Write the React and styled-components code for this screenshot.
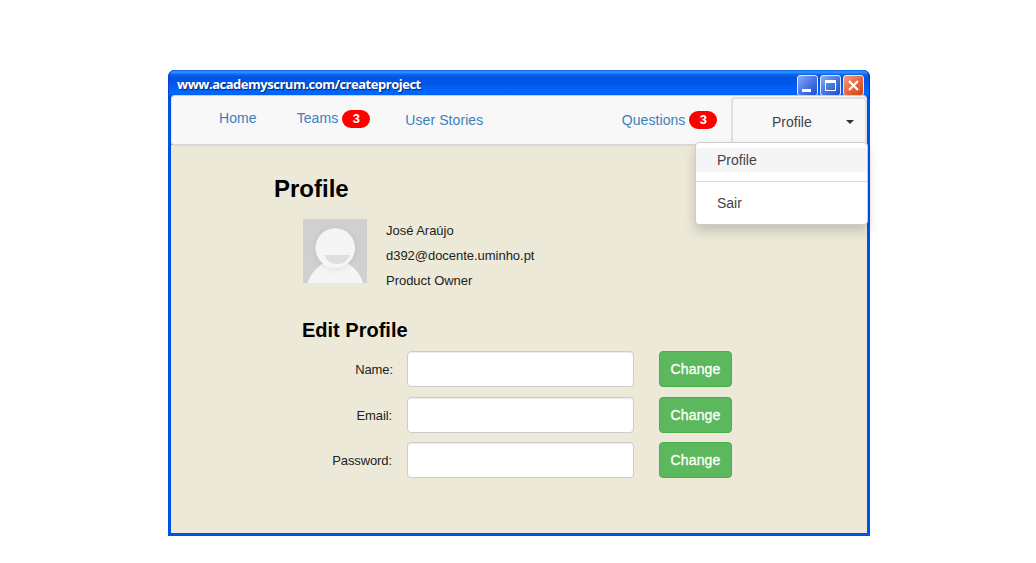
import React from "react";
import styled, { createGlobalStyle } from "styled-components";

const GlobalStyle = createGlobalStyle`
  * { box-sizing: border-box; }
  body { margin: 0; background: #fff; font-family: "Liberation Sans", Arial, sans-serif; overflow: hidden; }
  h1, h2, p { margin: 0; }
`;

const Page = styled.main`
  padding: 70px 168px 27px;
  height: 563px;
`;

const Window = styled.section`
  width: 702px;
  height: 466px;
  display: flex;
  flex-direction: column;
  padding: 0 3px 3px;
  background: #0054e3;
  border-radius: 7px 7px 0 0;
`;

const TitleBar = styled.header`
  flex: none;
  height: 29px;
  margin: 0 -3px -4px;
  padding: 5px 6px 0 9px;
  display: flex;
  justify-content: space-between;
  border-radius: 7px 7px 0 0;
  background: linear-gradient(to bottom, #0a5ee0 0, #3c96ff 2px, #2080f8 3px, #0562ee 5px, #0054e3 8px, #0055e6 13px, #0162fb 19px, #0167ff 23px, #0060f4 25px, #003dc0 29px);
  box-shadow: inset 1px 0 #0a40c8, inset -1px 0 #0a35b0;
`;

const Title = styled.span`
  font: bold 13px/19px "Open Sans", "Trebuchet MS", sans-serif;
  letter-spacing: ${(p) => p.$spacing}px;
  color: #fff;
  text-shadow: 1px 1px 1px #0a246a;
`;

const Controls = styled.div`
  display: flex;
  gap: 2px;
`;

const ControlButton = styled.button`
  width: 21px;
  height: 21px;
  padding: 0;
  border: 1px solid #dfe8ff;
  border-radius: 3px;
  background: ${(p) =>
    p.$close
      ? "linear-gradient(135deg, #f0a088 0%, #e5683f 50%, #d8430f 100%)"
      : "linear-gradient(135deg, #8fabf3 0%, #4f7be4 45%, #1a4fd2 100%)"};
  svg { display: block; }
`;

const NavBar = styled.nav`
  position: relative;
  flex: none;
  height: 51px;
  display: flex;
  align-items: flex-start;
  background: #f8f8f8;
  border: 1px solid #e4e4e4;
  border-top-color: #b9d3fa;
  border-bottom: 2px solid #d9d9d9;
  border-radius: 4px;
  margin-bottom: -1px;
`;

const NavLink = styled.a`
  display: flex;
  gap: 4px;
  margin-left: ${(p) => p.$gap}px;
  margin-top: ${(p) => p.$top}px;
  font-size: 14px;
  line-height: 18px;
  letter-spacing: 0.08px;
  color: #3a80bd;
  white-space: nowrap;
`;

const Badge = styled.span`
  width: 28px;
  height: 18px;
  margin-top: ${(p) => p.$drop || 0}px;
  border-radius: 9px;
  background: #f00;
  color: #fff;
  font-size: 13px;
  font-weight: bold;
  line-height: 18px;
  text-align: center;
`;

const Dropdown = styled.div`
  position: relative;
  margin: 1px -1px 0 auto;
  width: 136px;
  height: 47px;
  border: 2px solid #dfdfdf;
  border-bottom: 0;
  border-radius: 4px 4px 0 0;
`;

const Toggle = styled.div`
  display: flex;
  align-items: center;
  justify-content: space-between;
  height: 46px;
  padding: 0 11px 0 39px;
  font-size: 14px;
  color: #444;
`;

const Caret = styled.span`
  border: 4px solid transparent;
  border-top-color: #333;
  border-bottom: 0;
`;

const Menu = styled.div`
  position: absolute;
  z-index: 2;
  right: -3px;
  top: 43px;
  width: 173px;
  height: 83px;
  padding: 5px 0 0;
  background: #fff;
  border: 1px solid #ccc;
  border-radius: 4px;
  box-shadow: 0 6px 12px rgba(0, 0, 0, 0.18);
`;

const MenuItem = styled.div`
  height: 24px;
  padding-left: 21px;
  font-size: 14px;
  line-height: 24px;
  color: #444;
  background: ${(p) => (p.$active ? "#f5f5f5" : "transparent")};
`;

const Divider = styled.div`
  height: 1px;
  margin: 9px 0;
  background: #d5d5d5;
`;

const Content = styled.div`
  flex: 1;
  padding: 30px 0 0 103px;
  background: #ece9d8;
  color: #000;
`;

const Heading = styled.h1`
  font-size: 24px;
  line-height: 28px;
`;

const Summary = styled.div`
  display: flex;
  gap: 19px;
  margin: 16px 0 0 29px;
`;

const Details = styled.div`
  font-size: 13px;
  line-height: 25px;
  letter-spacing: -0.03px;
  color: #222;
  margin-top: -1px;
`;

const SubHeading = styled.h2`
  font-size: 20px;
  line-height: 24px;
  margin: 25px 0 0 28px;
`;

const Form = styled.div`
  display: grid;
  grid-template-columns: 119px 227px 73px;
  grid-template-rows: 36px 36px 36px;
  row-gap: 9.5px;
  margin-top: 9px;
  align-items: center;
`;

const Label = styled.label`
  padding-top: 2px;
  padding-right: ${(p) => p.$inset}px;
  font-size: 13px;
  line-height: 16px;
  letter-spacing: -0.1px;
  color: #222;
  text-align: right;
`;

const Input = styled.input`
  width: 227px;
  height: 36px;
  margin-left: 14px;
  border: 1px solid #ccc;
  border-radius: 4px;
  background: #fff;
  box-shadow: inset 0 1px 1px rgba(0, 0, 0, 0.075);
`;

const ChangeButton = styled.button`
  width: 73px;
  height: 36px;
  margin-left: 39px;
  padding: 0;
  border: 1px solid #4cae4c;
  border-radius: 4px;
  background: #5cb85c;
  color: #fff;
  font: 14px "Liberation Sans", Arial, sans-serif;
  letter-spacing: 0.15px;
  -webkit-text-stroke: 0.3px #fff;
`;

const Avatar = () => (
  <svg width="64" height="64" viewBox="0 0 64 64" aria-hidden="true">
    <defs>
      <filter id="soft" x="-30%" y="-30%" width="160%" height="160%">
        <feDropShadow dx="0" dy="1" stdDeviation="3" floodOpacity="0.1" />
      </filter>
      <clipPath id="frame"><rect width="64" height="64" /></clipPath>
    </defs>
    <g clipPath="url(#frame)">
      <rect width="64" height="64" fill="#d0d0d0" />
      <path d="M4.5 64C8 54 14 48 21 44H44C51 48 57 54 60 64Z" fill="#f5f5f5" />
      <circle cx="32.3" cy="29" r="19.8" fill="#f5f5f5" filter="url(#soft)" />
      <path d="M21.5 36H47C44 42 40 45 34 45S24 42 21.5 36Z" fill="#dedede" />
    </g>
  </svg>
);

const fields = [
  { label: "Name:", inset: 0 },
  { label: "Email:", inset: 1 },
  { label: "Password:", inset: 1 },
];

export default function App() {
  return (
    <Page>
      <GlobalStyle />
      <Window>
        <TitleBar>
          <Title $spacing={-0.48}>www.academyscrum.com/createproject</Title>
          <Controls>
            <ControlButton aria-label="Minimize">
              <svg width="19" height="19"><path d="M4 13h9v3H4z" fill="#fff" /></svg>
            </ControlButton>
            <ControlButton aria-label="Maximize">
              <svg width="19" height="19"><path d="M4 4h11v11H4zM5 7v7h9V7z" fill="#fff" fillRule="evenodd" /></svg>
            </ControlButton>
            <ControlButton $close aria-label="Close">
              <svg width="19" height="19"><path d="M5 5l9 9M14 5l-9 9" stroke="#fff" strokeWidth="2.2" /></svg>
            </ControlButton>
          </Controls>
        </TitleBar>
        <NavBar>
          <NavLink $gap={47} $top={13}>Home</NavLink>
          <NavLink $gap={40} $top={13}>Teams<Badge $drop={1}>3</Badge></NavLink>
          <NavLink $gap={35} $top={15}>User Stories</NavLink>
          <NavLink $gap={138.4} $top={15}>Questions<Badge>3</Badge></NavLink>
          <Dropdown>
            <Toggle>Profile<Caret /></Toggle>
            <Menu>
              <MenuItem $active>Profile</MenuItem>
              <Divider />
              <MenuItem>Sair</MenuItem>
            </Menu>
          </Dropdown>
        </NavBar>
        <Content>
          <Heading>Profile</Heading>
          <Summary>
            <Avatar />
            <Details>
              <p>José Araújo</p>
              <p>d392@docente.uminho.pt</p>
              <p>Product Owner</p>
            </Details>
          </Summary>
          <SubHeading>Edit Profile</SubHeading>
          <Form>
            {fields.map(({ label, inset }) => (
              <React.Fragment key={label}>
                <Label $inset={inset}>{label}</Label>
                <Input aria-label={label} />
                <ChangeButton>Change</ChangeButton>
              </React.Fragment>
            ))}
          </Form>
        </Content>
      </Window>
    </Page>
  );
}
